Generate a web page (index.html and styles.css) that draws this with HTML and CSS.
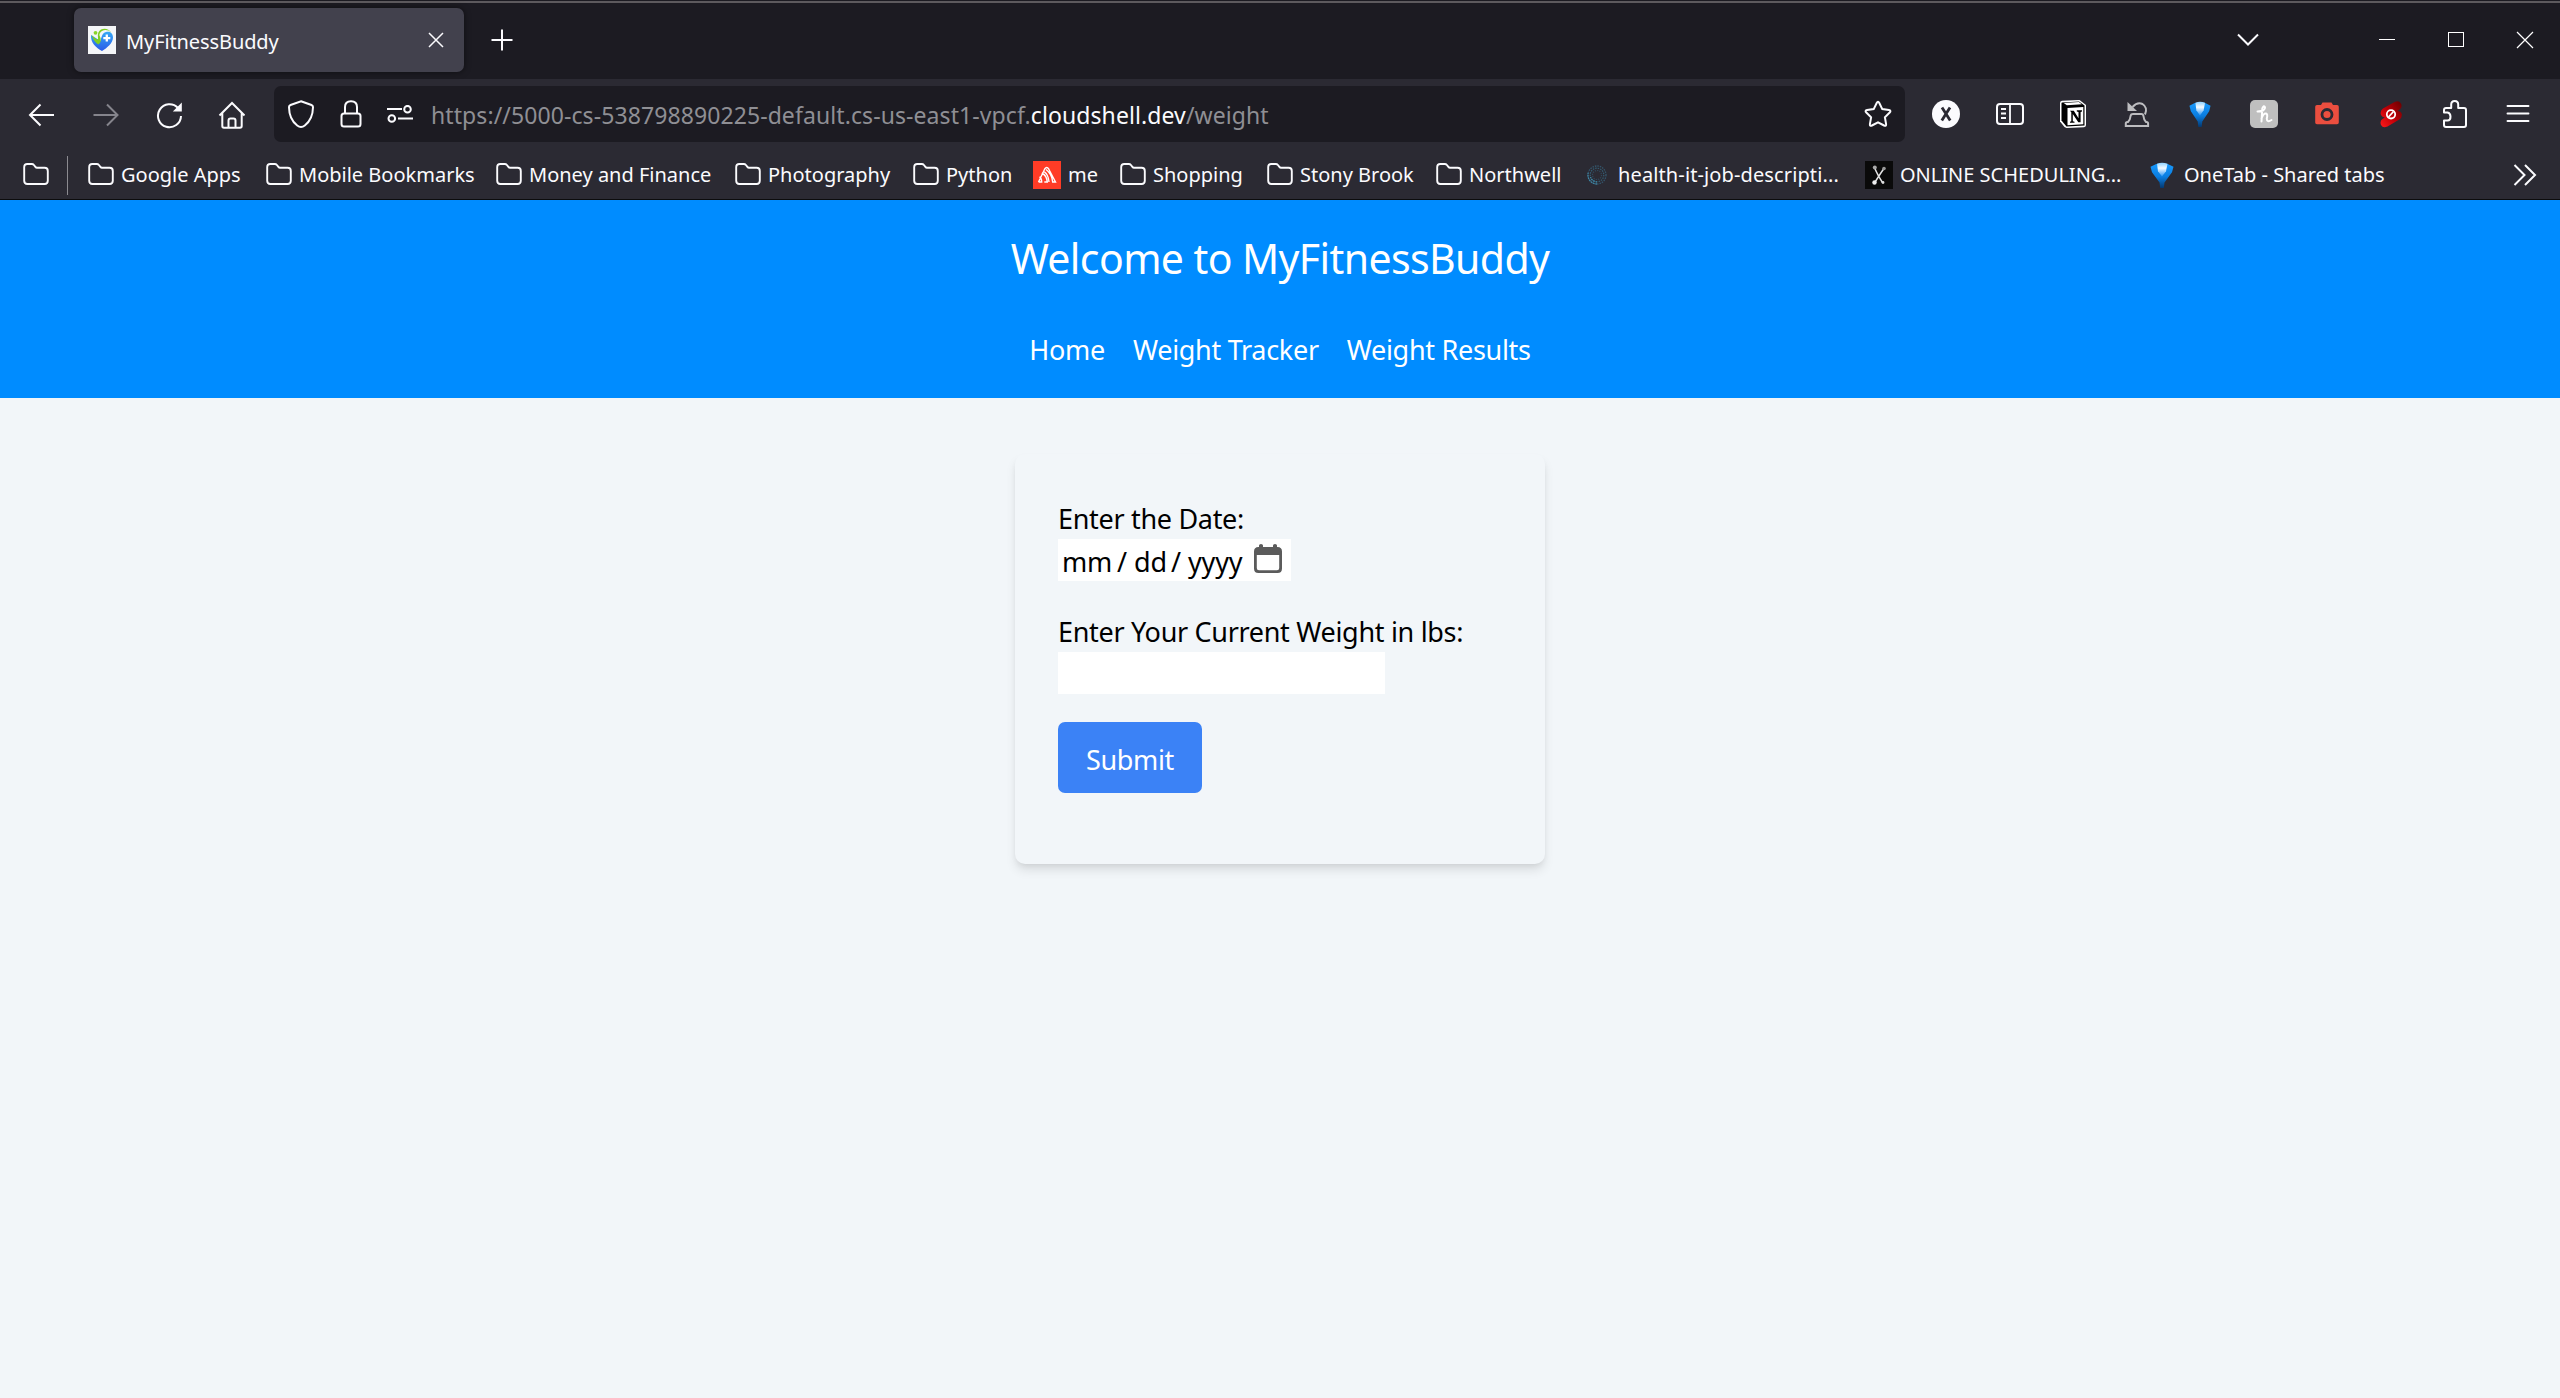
FILE: index.html
```html
<!DOCTYPE html>
<html lang="en">
<head>
<meta charset="utf-8">
<title>MyFitnessBuddy</title>
<link rel="stylesheet" href="styles.css">
</head>
<body>
<svg class="defs" width="0" height="0" aria-hidden="true">
  <defs>
    <linearGradient id="g-pin" x1="0" y1="0" x2="0" y2="1"><stop offset="0" stop-color="#35a8f5"/><stop offset="1" stop-color="#2a5be8"/></linearGradient>
    <linearGradient id="g-red" x1="1" y1="0" x2="0" y2="1"><stop offset="0" stop-color="#650000"/><stop offset=".55" stop-color="#c40008"/><stop offset="1" stop-color="#ff1a1a"/></linearGradient>
    <linearGradient id="g-fun" x1="0" y1="0" x2="0" y2="1"><stop offset="0" stop-color="#1a9cff"/><stop offset=".55" stop-color="#0a7de0"/><stop offset="1" stop-color="#04386f"/></linearGradient>
    <linearGradient id="g-shine" x1="0" y1="0" x2="0" y2="1"><stop offset="0" stop-color="#8fd2ff"/><stop offset=".4" stop-color="#f4fbff"/><stop offset="1" stop-color="#2b96f6"/></linearGradient>
    <symbol id="folder" viewBox="0 0 28 24"><path d="M2.2 18.8V5Q2.2 2 5.2 2h4.600q1.300 0 2.100 1l1.500 1.900q.6.8 1.600.8h7.600q3.200 0 3.200 3.200v9.900q0 3.200-3.200 3.200H5.400q-3.200 0-3.200-3.200z" fill="none" stroke="#fbfbfe" stroke-width="1.900"/></symbol>
    <symbol id="funnel" viewBox="0 0 24 28" preserveAspectRatio="none"><path d="M.5 5Q12-3 23.500 5L22 11 14.500 22 13.800 28H10.200L9.500 22 2 11z" fill="url(#g-fun)"/><path d="M7 2Q12-.5 17.500 2L16 10 12 15.500 8 10z" fill="url(#g-shine)"/></symbol>
  </defs>
</svg>
<div class="browser">
  <div class="tabbar">
    <div class="tab">
      <svg class="favicon" viewBox="0 0 28 28"><rect width="28" height="28" fill="#f5f6f8"/><path d="M3 9C2.500 17 8 21.500 14 25 19 22 25 17 25 11.500 25 7 21.500 5 18 6 14 7 13.500 11 12.500 15Z" fill="url(#g-pin)"/><path d="M3.500 9Q6.500 17 10.500 18.500 14.500 15 11.500 9.500 11 7 14 5 18.500 2.500 23.500 6.500 19 1 13 3.500 9 6 10 11.500 10.500 14 9 13.500 6.500 12 3.500 9Z" fill="#7fcf22"/><circle cx="7.500" cy="6.800" r="1.900" fill="#8ad42a"/><path d="M18.800 8.600v7M15.300 12.100h7" stroke="#fff" stroke-width="2.300"/></svg>
      <span class="tab-title">MyFitnessBuddy</span>
      <svg class="tab-close" viewBox="0 0 16 16"><path d="M1 1l14 14M15 1L1 15" stroke="#fbfbfe" stroke-width="1.500"/></svg>
    </div>
    <svg class="newtab" viewBox="0 0 22 22"><path d="M11 .5v21M.5 11h21" stroke="#fbfbfe" stroke-width="2"/></svg>
    <svg class="alltabs" viewBox="0 0 22 14"><path d="M1 1.500l10 10 10-10" fill="none" stroke="#fbfbfe" stroke-width="2"/></svg>
    <svg class="win" viewBox="0 0 18 18"><path d="M1 8.500h16" stroke="#fff" stroke-width="1"/></svg>
    <svg class="win" viewBox="0 0 18 18"><rect x="1.500" y="1.500" width="15" height="14" fill="none" stroke="#fff" stroke-width="1"/></svg>
    <svg class="win" viewBox="0 0 18 18"><path d="M1 1l16 16M17 1L1 17" stroke="#fff" stroke-width="1.200"/></svg>
  </div>

  <div class="toolbar">
    <div class="nav">
      <svg viewBox="0 0 28 28"><path d="M26 14H2M12.500 3.500L2 14l10.500 10.500" fill="none" stroke="#fbfbfe" stroke-width="2"/></svg>
      <svg viewBox="0 0 28 28"><path d="M2.500 14h24M16 3.500L26.500 14 16 24.500" fill="none" stroke="#85848c" stroke-width="2"/></svg>
      <svg viewBox="0 0 28 28"><path d="M24 7A11.500 11.500 0 1 0 27 15" fill="none" stroke="#fbfbfe" stroke-width="2"/><path d="M27.800 1.500V10.500H18.800z" fill="#fbfbfe"/></svg>
      <svg viewBox="0 0 28 28"><path d="M2.500 14.500L15 2l12.500 12.500M5.300 12v13q0 1.700 1.700 1.700H23q1.700 0 1.700-1.700V12M11.500 26.500V19.500q0-2 2-2h3q2 0 2 2v7" fill="none" stroke="#fbfbfe" stroke-width="2"/></svg>
    </div>
    <div class="urlbar">
      <svg class="shield" viewBox="0 0 28 28"><path d="M14 1.200L24.500 5q1.600.6 1.500 2.300-.2 12.200-8.200 18.200-3.800 2.800-7.600 0Q2.200 19.500 2 7.300 1.900 5.600 3.500 5z" fill="none" stroke="#fbfbfe" stroke-width="2"/></svg>
      <svg class="lock" viewBox="0 0 22 28"><path d="M5 14V7Q5 1.200 11 1.200T17 7V14" fill="none" stroke="#fbfbfe" stroke-width="2"/><rect x="1.500" y="13.500" width="19" height="13" rx="2.500" fill="none" stroke="#fbfbfe" stroke-width="2"/></svg>
      <svg class="perms" viewBox="0 0 26 18"><path d="M0 4h15M11 13.500h15" stroke="#fbfbfe" stroke-width="2"/><circle cx="20.500" cy="4.200" r="3.300" fill="none" stroke="#fbfbfe" stroke-width="2"/><circle cx="4.800" cy="13.500" r="3.300" fill="none" stroke="#fbfbfe" stroke-width="2"/></svg>
      <span class="url">https://5000-cs-538798890225-default.cs-us-east1-vpcf.<b>cloudshell.dev</b>/weight</span>
      <svg class="star" viewBox="0 0 28 28"><path d="M12.700 3q1.300-2.300 2.600 0l3 6.100 6.600 1q2.600.5.800 2.400l-4.800 4.800 1.200 6.800q.3 2.500-2 1.400L14 22.300 7.900 25.500q-2.300 1.100-2-1.400l1.200-6.800-4.800-4.800q-1.800-1.900.8-2.400l6.600-1z" fill="none" stroke="#fbfbfe" stroke-width="2"/></svg>
    </div>
    <div class="extensions">
      <svg viewBox="0 0 28 28"><circle cx="14" cy="14" r="14" fill="#fbfbfe"/><path d="M10 7.500l8.200 13M18 7.500l-8.200 13" stroke="#2b2a33" stroke-width="2.800"/></svg>
      <svg viewBox="0 0 28 28"><rect x="1" y="4" width="26" height="20" rx="3" fill="none" stroke="#fbfbfe" stroke-width="2"/><path d="M14 4v20M5 9h5M5 13.500h5M5 18h5" stroke="#fbfbfe" stroke-width="1.800"/></svg>
      <svg viewBox="0 0 28 28"><path d="M3 .8L20.500 0 27 5v20q0 2-2 2.200L7.500 28 5.500 27 1 21.500V3Q1 1 3 .8z" fill="#fff"/><path d="M3 2.500L20 1.600 25.500 5.500V25.500L7.500 26.600 2.500 20.500V3z" fill="#000"/><path d="M4.800 2.900l15-.8L22.800 4.300 7.800 5.200z" fill="#fff"/><path d="M8.500 8L24.300 7v17.300L8.500 25.300z" fill="#fff"/><path d="M11 10.800h3.800l4.700 7.500V12l-1.700-.5V10.300h5.200v1.200l-1.400.4V22.300h-2.300L13.800 14v7.300l1.700.5v1H11v-1l1.300-.5V12.300z" fill="#000"/></svg>
      <svg viewBox="0 0 28 28"><path d="M9.500 7Q14.500 1.500 19.500 4 25 7.500 22 14.500" fill="none" stroke="#bdbdc0" stroke-width="2"/><path d="M4.500 2V11h9.500z" fill="#bdbdc0"/><path d="M10 14h8.500q1.500 0 1.800 1.500.5 4.500 2.700 6.500h.5q1.600 0 1.600 1.600V26H2.800v-2.400Q2.800 22 4.400 22H5q2.200-2 2.700-6.500Q8 14 10 14z" fill="none" stroke="#bdbdc0" stroke-width="2"/></svg>
      <svg viewBox="0 0 28 28"><use href="#funnel" x="3" y="1" width="22" height="26"/></svg>
      <svg viewBox="0 0 28 28"><rect width="28" height="28" rx="5" fill="#bfbfbf"/><path d="M7.500 11.500Q15.500 11 15 7.500 14 4.500 12.300 8.500L11.500 21.500M11.500 18.500Q13.500 13 16 13.500 18 14.200 16.800 18.500 16.800 23 21.500 20" fill="none" stroke="#fff" stroke-width="2" stroke-linecap="round"/></svg>
      <svg viewBox="0 0 28 28"><path d="M4 5H8l1.500-2.500h9L20 5h4q1.800 0 1.800 1.800v15.700q0 1.800-1.800 1.800H4q-1.800 0-1.800-1.800V6.800Q2.200 5 4 5z" fill="#eb4e3f"/><circle cx="14" cy="14.500" r="5" fill="none" stroke="#2b2a33" stroke-width="2.800"/></svg>
      <svg viewBox="0 0 28 28"><path d="M6 8.500L18 1.800q4-1.800 6 1.700 1.700 4-1.500 6l-2 1.500q3.500 0 4.300 3 .5 3.700-2.500 5.500L10.500 26.500q-4.500 2-6.500-1.500-1.500-4 1.500-6l2.300-1.500Q4.500 17 3.700 14 3.200 10.500 6 8.500z" fill="url(#g-red)"/><circle cx="14" cy="14.300" r="4.200" fill="none" stroke="#fff" stroke-width="1.800"/><path d="M11.500 17l5-5.500" stroke="#fff" stroke-width="1.800"/></svg>
      <svg viewBox="0 0 28 28"><path d="M4 12V10q0-2 2-2h5.200V4.500Q11.200 1 14.700 1t3.500 3.500V8H24q2 0 2 2v15q0 2-2 2H6q-2 0-2-2v-4.500h3.500q3 0 3-3.700T7.500 12.500H4z" fill="none" stroke="#fbfbfe" stroke-width="2" stroke-linejoin="round"/></svg>
      <svg viewBox="0 0 28 28"><path d="M3.500 6h21M3.500 13.500h21M3.500 21h21" stroke="#fbfbfe" stroke-width="1.900" stroke-linecap="round"/></svg>
    </div>
  </div>

  <div class="bookmarks">
    <svg class="bm-icon root"><use href="#folder"/></svg>
    <div class="bm-sep"></div>
    <div class="bm-list">
      <div class="bm"><svg class="bm-icon"><use href="#folder"/></svg>Google Apps</div>
      <div class="bm"><svg class="bm-icon"><use href="#folder"/></svg>Mobile Bookmarks</div>
      <div class="bm"><svg class="bm-icon"><use href="#folder"/></svg>Money and Finance</div>
      <div class="bm"><svg class="bm-icon"><use href="#folder"/></svg>Photography</div>
      <div class="bm"><svg class="bm-icon"><use href="#folder"/></svg>Python</div>
      <div class="bm site"><svg class="bm-site" viewBox="0 0 28 28"><rect width="28" height="28" fill="#ff3c26"/><path d="M5.500 21h3.200q0-4-2.200-5.200M5.500 21l6.200-13q2-3 4 0L22.500 21h-2.800Q19 13 13 8.500M11.300 21h3q-.5-6.500-5.500-9M16 21Q15.500 13.500 10.500 10" fill="none" stroke="#fff" stroke-width="1.400"/></svg>me</div>
      <div class="bm"><svg class="bm-icon"><use href="#folder"/></svg>Shopping</div>
      <div class="bm"><svg class="bm-icon"><use href="#folder"/></svg>Stony Brook</div>
      <div class="bm"><svg class="bm-icon"><use href="#folder"/></svg>Northwell</div>
      <div class="bm dotted"><svg class="bm-site ring" viewBox="0 0 20 20"><circle cx="10" cy="10" r="9" fill="none" stroke="#34556b" stroke-width="1.300" stroke-dasharray="1.500 1"/><circle cx="10" cy="10" r="6.800" fill="none" stroke="#355d72" stroke-width="1.200" stroke-dasharray="1.500 1"/><circle cx="10" cy="10" r="4.500" fill="none" stroke="#30485a" stroke-width="1.200" stroke-dasharray="1.300 1"/><path d="M10 19A9 9 0 0 1 1.200 8M10 16.800A6.800 6.800 0 0 1 3.500 12" fill="none" stroke="#3f87a5" stroke-width="1.300" stroke-dasharray="1.500 1"/></svg>health-it-job-descripti...</div>
      <div class="bm site"><svg class="bm-site" viewBox="0 0 28 28"><rect width="28" height="28" fill="#0a0a0a"/><path d="M9.500 6.500Q12 13 17.500 21.500M19 7.500Q15 13 9.500 22" fill="none" stroke="#e4e4e4" stroke-width="1.500"/><circle cx="9.800" cy="6.500" r="2" fill="#aaa"/><circle cx="19" cy="7.500" r="1.800" fill="#999"/><circle cx="9.500" cy="21.500" r="2.200" fill="#eee"/><circle cx="18" cy="21.500" r="1.400" fill="#ddd"/></svg>ONLINE SCHEDULING...</div>
      <div class="bm site"><svg class="bm-site" viewBox="0 0 28 28"><use href="#funnel" x="1" y="1" width="24" height="26"/></svg>OneTab - Shared tabs</div>
    </div>
    <svg class="more" viewBox="0 0 24 22"><path d="M1.500 1l10 10-10 10M12 1l10 10-10 10" fill="none" stroke="#fbfbfe" stroke-width="2"/></svg>
  </div>
</div>

<header class="site-header">
  <h1>Welcome to MyFitnessBuddy</h1>
  <nav class="site-nav"><a>Home</a><a>Weight Tracker</a><a>Weight Results</a></nav>
</header>
<main>
  <form class="card">
    <label class="label">Enter the Date:</label>
    <div class="date"><span class="mm">mm</span><span class="slash">/</span><span class="dd">dd</span><span class="slash">/</span><span class="yyyy">yyyy</span>
      <svg class="cal" viewBox="0 0 28 29"><path d="M4.500 3H5V1.500Q5 0 7 0T9 1.500V3H19V1.500Q19 0 21 0t2 1.500V3h.5Q28 3 28 7.500V24.500Q28 29 23.500 29h-19Q0 29 0 24.500v-17Q0 3 4.500 3zM2.800 11V24q0 2.200 2.200 2.200H23q2.200 0 2.200-2.200V11z" fill="#5b5b5b" fill-rule="evenodd"/></svg>
    </div>
    <label class="label second">Enter Your Current Weight in lbs:</label>
    <input class="weight" type="text">
    <button class="submit" type="button">Submit</button>
  </form>
</main>
</body>
</html>
```
FILE: styles.css
```css
* { box-sizing: border-box; }
body {
  margin: 0;
  height: 1398px;
  overflow: hidden;
  background: #f2f6f9;
  font-family: "Noto Sans", "Open Sans", sans-serif;
  color: #000;
}
svg { display: block; flex: none; }
.defs { position: absolute; }

/* Browser window */
.browser { height: 200px; background: #2b2a33; border-bottom: 1px solid #0c0c0d; color: #fbfbfe; }
.tabbar {
  height: 79px;
  display: flex;
  align-items: center;
  padding: 3px 26px 2px 74px;
  background: linear-gradient(#1c1b22 1px, #5d5a5e 1px, #5d5a5e 3px, #1c1b22 3px);
}
.tab {
  width: 390px;
  height: 64px;
  display: flex;
  align-items: center;
  padding: 0 20px 0 14px;
  border-radius: 7px;
  background: #42414d;
  box-shadow: 0 0 6px rgba(0, 0, 0, .5);
}
.favicon { width: 28px; height: 28px; }
.tab-title { flex: 1; margin: 3px 0 0 10px; font-size: 20px; line-height: 28px; letter-spacing: -.1px; }
.tab-close { width: 16px; height: 16px; }
.newtab { width: 22px; height: 22px; margin-left: 27px; }
.alltabs { width: 22px; height: 14px; margin: 0 119px 0 auto; }
.win { width: 18px; height: 18px; margin-left: 51px; }
.alltabs + .win { margin-left: 0; }

.toolbar { height: 72px; display: flex; align-items: center; padding: 0 28px; }
.nav { width: 246px; display: flex; gap: 35px; }
.nav svg { width: 28px; height: 28px; }
.urlbar {
  width: 1631px;
  height: 56px;
  margin-top: -2px;
  display: flex;
  align-items: center;
  padding: 0 13px 0 13px;
  border-radius: 7px;
  background: #1c1b22;
}
.shield { width: 28px; height: 28px; }
.lock { width: 22px; height: 28px; margin-left: 25px; }
.perms { width: 26px; height: 18px; margin-left: 25px; }
.url { flex: 1; margin: 2px 0 0 18px; font-size: 23px; line-height: 32px; letter-spacing: .09px; color: #8f8f94; }
.url b { font-weight: 400; color: #fbfbfe; }
.star { width: 28px; height: 28px; }
.extensions { flex: 1; display: flex; justify-content: space-between; margin: -2px 0 0 27px; }
.extensions svg { width: 28px; height: 28px; }

.bookmarks { height: 48px; display: flex; align-items: center; padding: 0 23px 0 22px; }
.bm-icon { width: 28px; height: 24px; margin: -2px 6px 0 0; }
.bm-icon.root { margin: -2px 0 0; }
.bm-sep { width: 1px; height: 39px; margin: 0 19px 0 17px; background: #8b8a90; }
.bm-list {
  flex: 1;
  display: grid;
  grid-template-columns: 178px 230px 239px 178px 120px 87px 147px 169px 151px 278px 284px 250px;
}
.bm { display: flex; align-items: center; font-size: 20px; line-height: 28px; white-space: nowrap; }
.bm-site { width: 28px; height: 28px; margin: -1px 7px 0 1px; }
.dotted { letter-spacing: .12px; }
.ring { width: 20px; height: 20px; margin: 0 11px 0 1px; }
.more { width: 24px; height: 22px; }

/* Page */
.site-header { height: 198px; padding-top: 30px; background: #008cff; color: #fff; text-align: center; }
h1 { margin: 0 0 43px; font-weight: 400; font-size: 41px; line-height: 56px; letter-spacing: -.6px; }
.site-nav { display: flex; justify-content: center; gap: 28px; font-size: 27px; line-height: 42px; letter-spacing: -.3px; }
main { display: flex; justify-content: center; padding-top: 56px; }
.card {
  width: 530px;
  height: 410px;
  padding: 43px;
  border-radius: 10px;
  background: #f2f6f9;
  box-shadow: 0 7px 10.5px -1.75px rgba(0, 0, 0, .1), 0 3.5px 7px -3.5px rgba(0, 0, 0, .1);
  font-size: 27px;
}
.label { display: block; height: 42px; line-height: 43px; letter-spacing: -.31px; }
.label.second { line-height: 44px; }
.date { display: flex; width: 233px; height: 42px; margin-bottom: 29px; padding-left: 4px; background: #fff; line-height: 45px; }
.mm { width: 55px; letter-spacing: -.3px; }
.slash { width: 17px; }
.dd { width: 37px; }
.yyyy { width: 66px; letter-spacing: -.2px; }
.cal { width: 28px; height: 29px; margin-top: 5px; }
.weight { display: block; width: 327px; height: 42px; padding: 0; border: 0; background: #fff; font: inherit; }
.submit {
  display: block;
  width: 144px;
  height: 71px;
  margin-top: 28px;
  padding: 3px 0 0;
  border: 0;
  border-radius: 7px;
  background: #3b82f6;
  color: #fff;
  font: inherit;
  letter-spacing: -.35px;
}
```
